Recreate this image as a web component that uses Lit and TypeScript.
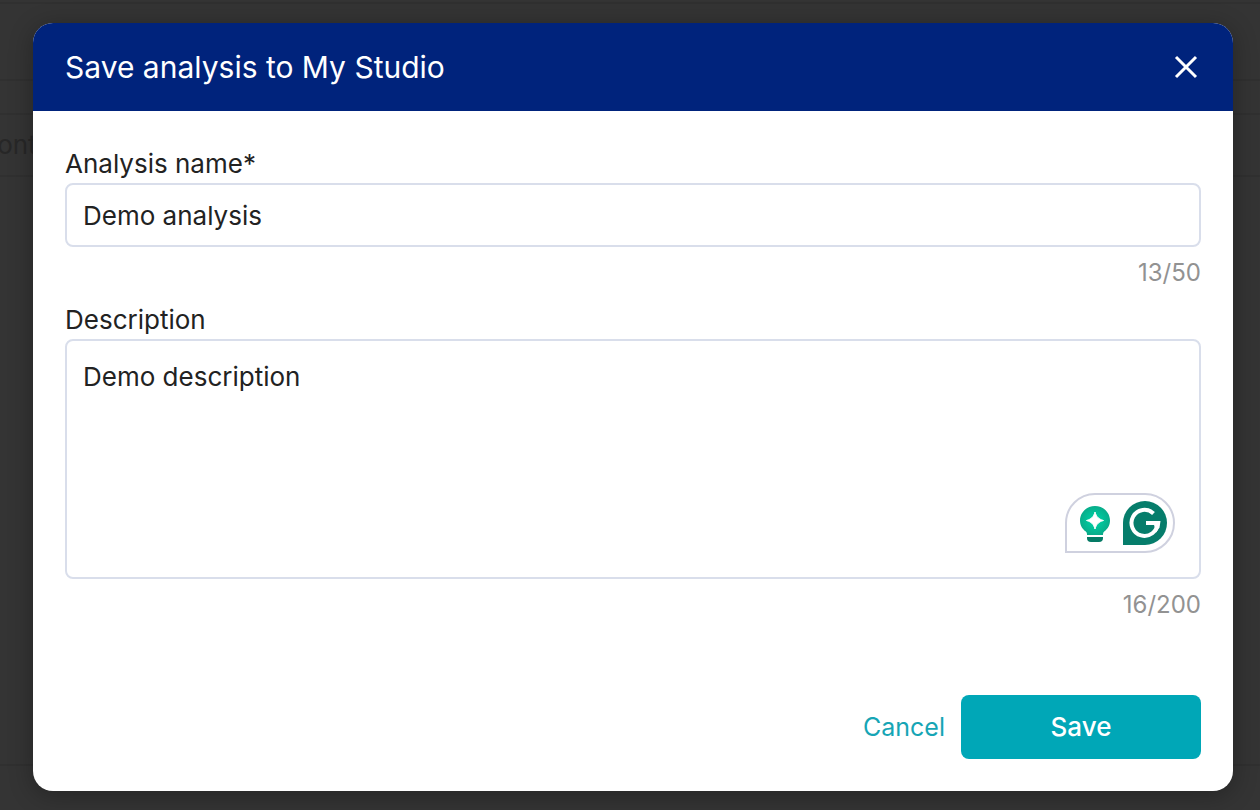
import { LitElement, html, css } from "lit";
import { customElement, state } from "lit/decorators.js";

@customElement("app-root")
export class AppRoot extends LitElement {
  @state() private name = "Demo analysis";
  @state() private description = "Demo description";

  static styles = css`
    :host {
      display: grid;
      min-height: 100vh;
      background: #343434;
      overflow: hidden;
      font-family: Inter, "Liberation Sans", sans-serif;
      color: #222;
    }
    * {
      box-sizing: border-box;
    }
    .page,
    .overlay {
      grid-area: 1 / 1;
      min-width: 0;
    }
    .page {
      display: flex;
      flex-direction: column;
      padding: 2px 0 44px;
      color: #272727;
      font-size: 26px;
      line-height: 60px;
    }
    .band {
      border-top: 2px solid #303030;
    }
    .top {
      height: 77px;
    }
    .tabs {
      height: 34px;
    }
    .filters {
      height: 62px;
      display: flex;
    }
    .filter {
      width: 52px;
      display: flex;
      justify-content: flex-end;
      overflow: hidden;
    }
    .main {
      flex: 1;
      border-bottom: 2px solid #303030;
    }
    .overlay {
      padding: 23px 27px 19px 33px;
      z-index: 1;
    }
    .dialog {
      background: #fff;
      border-radius: 20px;
      overflow: hidden;
      box-shadow: 0 4px 24px rgba(0, 0, 0, 0.3);
    }
    .header {
      display: flex;
      align-items: center;
      justify-content: space-between;
      padding: 24px 32px;
      background: #00237c;
      color: #fff;
    }
    .title {
      margin: 0;
      font-size: 30px;
      line-height: 40px;
      font-weight: 400;
    }
    button {
      border: 0;
      background: none;
      font: inherit;
      cursor: pointer;
    }
    .close {
      padding: 0;
      width: 30px;
      height: 30px;
      color: #fff;
    }
    .close svg,
    .helper svg {
      display: block;
    }
    .form {
      padding: 36px 32px 32px;
    }
    .label {
      display: block;
      padding-bottom: 2px;
      font-size: 26px;
      line-height: 34px;
    }
    .field {
      display: block;
      width: 100%;
      border: 2px solid #d9deeb;
      border-radius: 8px;
      background: #fff;
      color: #222;
      font: inherit;
      font-size: 26px;
      line-height: 36px;
      padding: 13px 16px 11px;
      outline: none;
      resize: none;
    }
    .area {
      height: 240px;
      padding: 18px 16px;
    }
    .area-wrap {
      position: relative;
    }
    .count {
      padding: 8px 0 12px;
      font-size: 24px;
      line-height: 36px;
      text-align: right;
      color: #929292;
    }
    .helper {
      position: absolute;
      right: 26px;
      bottom: 26px;
      display: flex;
      align-items: center;
      gap: 12px;
      padding: 6px 6px 6px 12px;
      border: 2px solid #cfd1df;
      border-radius: 30px 30px 30px 0;
      background: #fff;
    }
    .actions {
      display: flex;
      justify-content: flex-end;
      gap: 16px;
      padding-top: 60px;
      font-size: 26px;
      line-height: 36px;
    }
    .cancel {
      padding: 0;
      font-size: 25px;
      color: #16a5b5;
    }
    .save {
      width: 240px;
      height: 64px;
      border-radius: 8px;
      background: #00a7b7;
      color: #fff;
      font-weight: 500;
    }
  `;

  render() {
    return html`
      <div class="page" aria-hidden="true">
        <div class="band top"></div>
        <div class="band tabs"></div>
        <div class="band filters"><div class="filter">Month</div></div>
        <div class="band main"></div>
      </div>
      <div class="overlay">
        <div class="dialog" role="dialog" aria-modal="true" aria-labelledby="title">
          <div class="header">
            <h1 class="title" id="title">Save analysis to My Studio</h1>
            <button class="close" type="button" aria-label="Close">
              <svg width="30" height="30" viewBox="0 0 30 30" fill="none" stroke="currentColor" stroke-width="3">
                <path d="M5 5 25 25M25 5 5 25" />
              </svg>
            </button>
          </div>
          <form class="form" @submit=${(e: Event) => e.preventDefault()}>
            <label class="label" for="name">Analysis name*</label>
            <input
              class="field"
              id="name"
              type="text"
              maxlength="50"
              .value=${this.name}
              @input=${(e: Event) => (this.name = (e.target as HTMLInputElement).value)}
            />
            <div class="count">${this.name.length}/50</div>
            <label class="label" for="description">Description</label>
            <div class="area-wrap">
              <textarea
                class="field area"
                id="description"
                maxlength="200"
                spellcheck="false"
                .value=${this.description}
                @input=${(e: Event) => (this.description = (e.target as HTMLTextAreaElement).value)}
              ></textarea>
              <div class="helper">
                <svg width="32" height="38" viewBox="0 -1 32 38">
                  <defs>
                    <radialGradient id="glow" cx="50%" cy="50%" r="55%">
                      <stop offset="0.35" stop-color="#00c79d" />
                      <stop offset="1" stop-color="#0aa887" />
                    </radialGradient>
                  </defs>
                  <path
                    fill="url(#glow)"
                    d="M16 1C7.7 1 1 7.500 1 15.500c0 5 2.500 8.500 5.500 10.800 1 .8 1.500 1.700 1.500 2.700v1h16V29c0-1 .5-1.900 1.500-2.700 3-2.300 5.500-5.800 5.500-10.800C31 7.500 24.300 1 16 1Z"
                  />
                  <path
                    fill="#fff"
                    d="M16 7c1.500 5 3.500 7 8.500 8.500-5 1.500-7 3.500-8.500 8.500-1.500-5-3.500-7-8.500-8.500C12.500 14 14.500 12 16 7Z"
                    stroke="#fff"
                    stroke-width="1"
                    stroke-linejoin="round"
                  />
                  <path fill="#057a65" d="M8 32h16v1a4 4 0 0 1-4 4h-8a4 4 0 0 1-4-4Z" />
                </svg>
                <svg width="44" height="44" viewBox="0 0 44 44">
                  <path fill="#067d6b" d="M22 0a22 22 0 0 1 0 44H0V22A22 22 0 0 1 22 0Z" />
                  <path
                    fill="none"
                    stroke="#fff"
                    stroke-width="4"
                    d="M30.500 12.500A13 13 0 1 0 34.500 22H23"
                  />
                  <path fill="#fff" d="M30 20h7.500l-1 6.500-3.500 5Z" />
                </svg>
              </div>
            </div>
            <div class="count">${this.description.length}/200</div>
            <div class="actions">
              <button class="cancel" type="button">Cancel</button>
              <button class="save" type="submit">Save</button>
            </div>
          </form>
        </div>
      </div>
    `;
  }
}
